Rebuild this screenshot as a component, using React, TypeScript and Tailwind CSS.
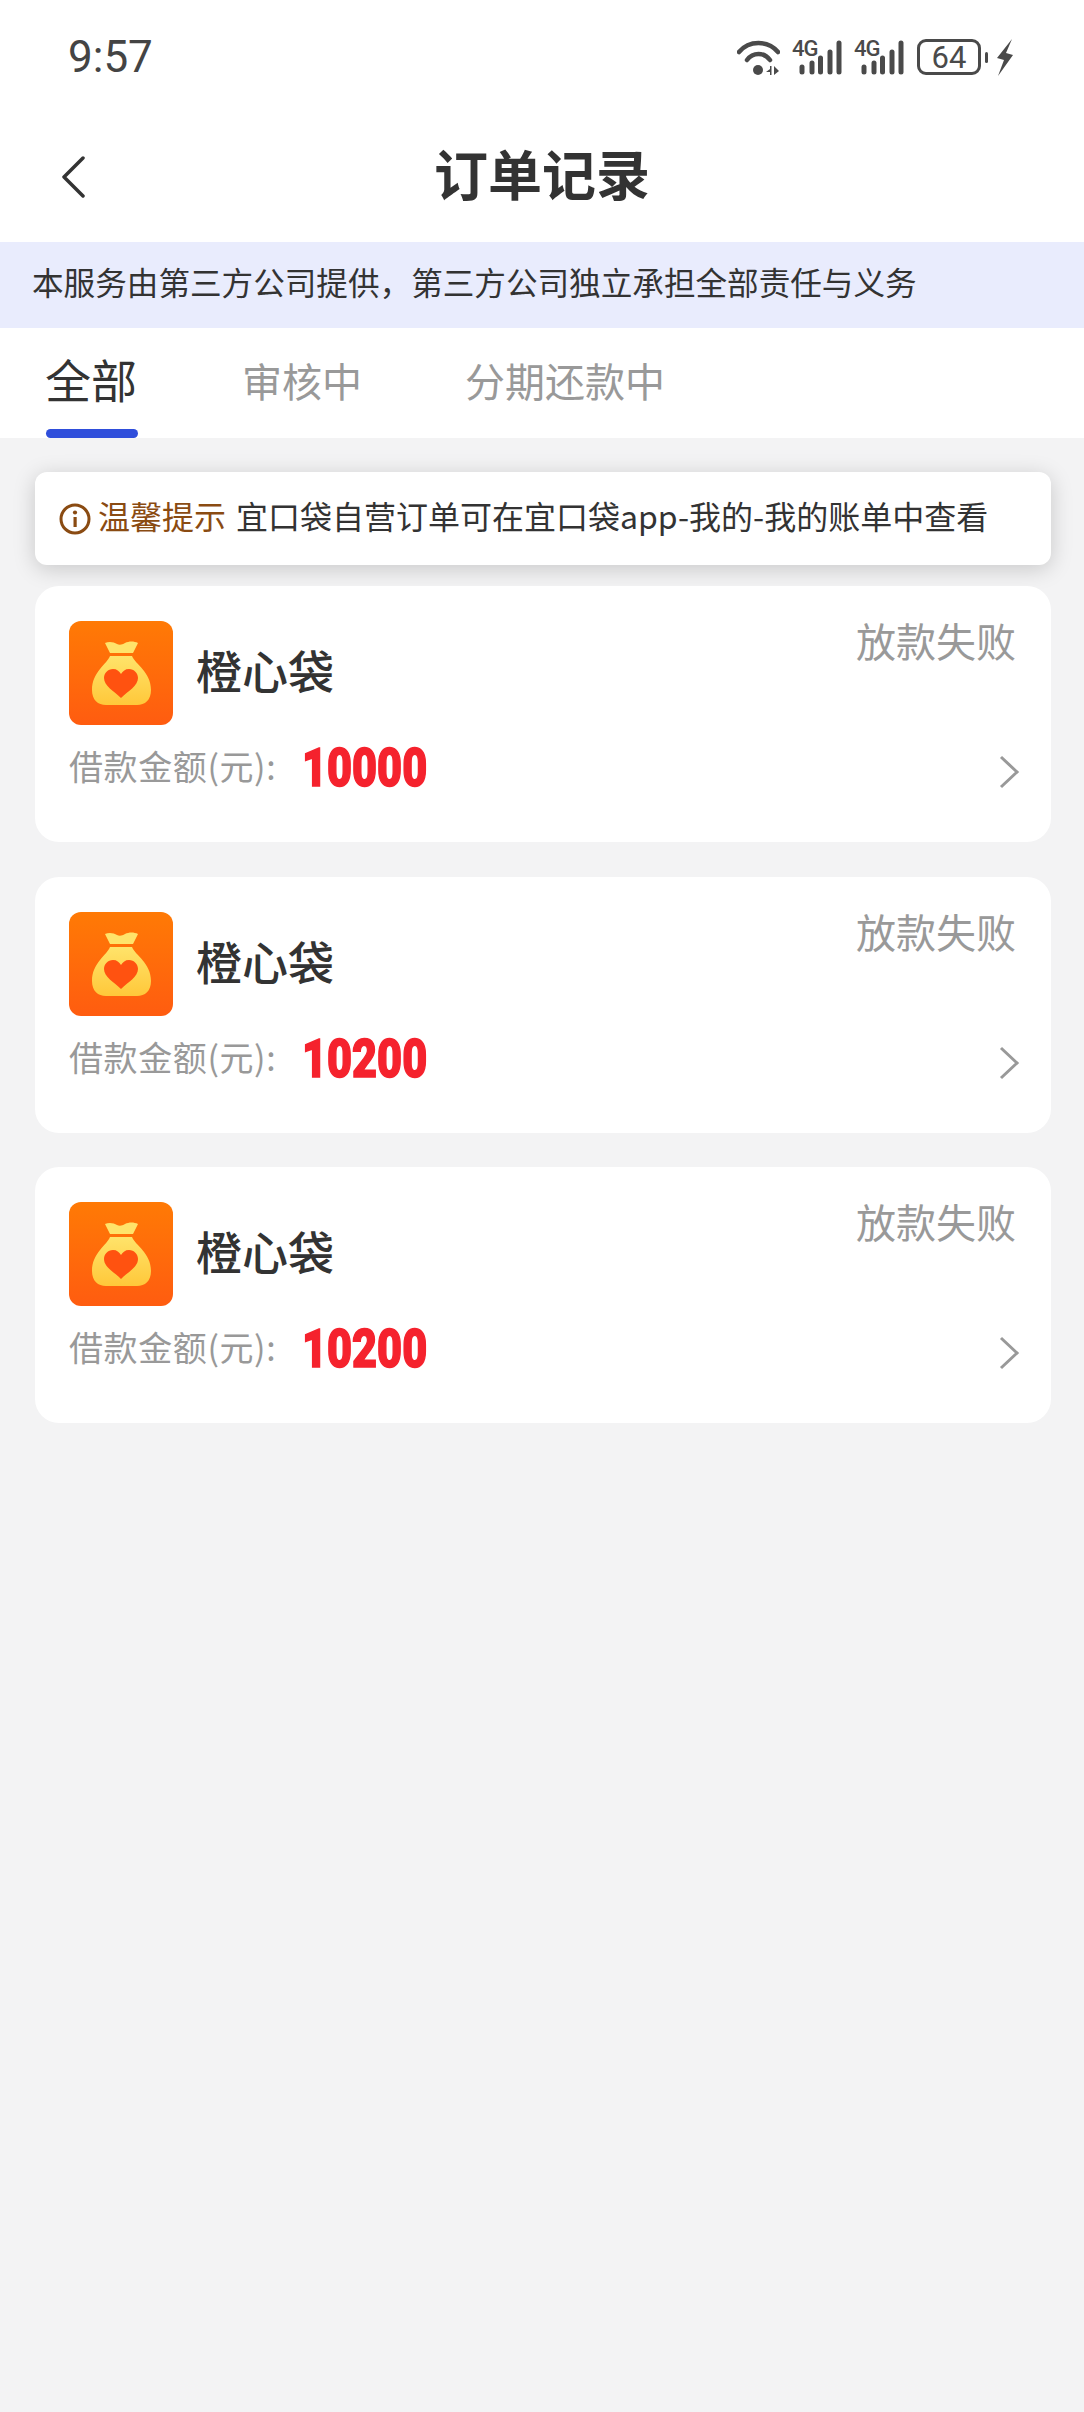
const CJK = 'font-["Noto_Sans_CJK_SC","Roboto",sans-serif]';

const orders = [{ amount: '10000' }, { amount: '10200' }, { amount: '10200' }];

function SignalIcon() {
  return (
    <div className="relative h-[35px] w-[50px]">
      <span className="absolute left-0 top-[-3px] font-['Roboto'] text-[22px] font-medium leading-[24px] tracking-[-1px] text-[#4a4a4a]">
        4G
      </span>
      <svg viewBox="0 0 50 35" className="absolute inset-0 h-full w-full">
        <g stroke="#4a4a4a" strokeWidth="5" strokeLinecap="round">
          <line x1="10" y1="27" x2="10" y2="32" />
          <line x1="20" y1="23" x2="20" y2="32" />
          <line x1="28.500" y1="18" x2="28.500" y2="32" />
          <line x1="38" y1="12" x2="38" y2="32" />
          <line x1="47" y1="3" x2="47" y2="32" />
        </g>
      </svg>
    </div>
  );
}

function StatusBar() {
  return (
    <div className="flex h-[110px] items-center justify-between pl-[68px] pr-[71px] pt-[4px]">
      <span className="font-['Roboto'] text-[44px] leading-none text-[#444444]">9:57</span>
      <div className="flex items-center">
        <svg viewBox="0 0 43 35" className="h-[35px] w-[43px]">
          <g fill="none" stroke="#4a4a4a" strokeWidth="4.5" strokeLinecap="round">
            <path d="M2 12C12 0 31 0 41 12" />
            <path d="M10 20C16 12 27 12 33 20" />
          </g>
          <circle cx="21" cy="30" r="5" fill="#4a4a4a" />
          <path d="M33 29l-4 3h4zM33 26v9h1.5v-9zM37 26v9l5-4z" fill="#4a4a4a" />
        </svg>
        <div className="ml-[12px]">
          <SignalIcon />
        </div>
        <div className="ml-[12px]">
          <SignalIcon />
        </div>
        <div className="ml-[13px] flex h-[36px] w-[64px] items-center justify-center rounded-[9px] border-[3px] border-[#4a4a4a] font-['Roboto'] text-[31px] leading-none text-[#4a4a4a]">
          64
        </div>
        <div className="ml-[4px] h-[11px] w-[3px] rounded-full bg-[#4a4a4a]" />
        <svg viewBox="0 0 16 37" className="ml-[9px] h-[37px] w-[16px]">
          <path d="M15 0L0 19l7 2L1 37 16 16l-7-2 6-14z" fill="#4a4a4a" />
        </svg>
      </div>
    </div>
  );
}

function BagLogo() {
  return (
    <svg viewBox="0 0 104 104" className="h-[104px] w-[104px] shrink-0">
      <defs>
        <linearGradient id="logo-bg" x1="0" y1="0" x2="0" y2="1">
          <stop offset="0" stopColor="#ff7a05" />
          <stop offset="1" stopColor="#ff5c10" />
        </linearGradient>
        <linearGradient id="logo-bag" x1="0" y1="0" x2="0" y2="1">
          <stop offset="0" stopColor="#ffe36a" />
          <stop offset="1" stopColor="#ffc83a" />
        </linearGradient>
      </defs>
      <rect width="104" height="104" rx="12" fill="url(#logo-bg)" />
      <path d="M36 22C40 20 45 21 48 23C50 24 53 24 56 22C60 20 65 20 69 22L64 32H41Z" fill="#ffe36a" />
      <path d="M41 35H63C66 43 82 51 82 69C82 79 76 84 68 84H37C29 84 23 79 23 69C23 51 38 43 41 35Z" fill="url(#logo-bag)" />
      <path d="M52 77C45 70 35 65 35 57C35 52 39 48 44 48C48 48 50 50 52 53C54 50 56 48 60 48C65 48 69 52 69 57C69 65 59 70 52 77Z" fill="#ff5210" />
    </svg>
  );
}

function OrderCard({ amount }: { amount: string }) {
  return (
    <div className="relative h-[256px] rounded-[24px] bg-white pl-[34px] pr-[35px] pt-[35px]">
      <div className="flex items-center">
        <BagLogo />
        <span className="mb-[8px] ml-[23px] text-[46px] font-medium leading-none text-[#333333]">橙心袋</span>
      </div>
      <div className="mt-[14px] flex h-[60px] items-center">
        <span className="mb-[6px] w-[233px] text-[34px] leading-none tracking-[0.6px] text-[#999999]">借款金额(元):</span>
        <span className="mb-[2px] inline-block origin-left scale-x-[0.8] font-['Roboto'] text-[54px] font-black leading-none text-[#f5222d] [-webkit-text-stroke:1.5px_#f5222d]">
          {amount}
        </span>
      </div>
      <span className="absolute right-[35px] top-[30px] text-[40px] leading-[48px] text-[#999999]">放款失败</span>
      <svg viewBox="0 0 22 34" className="absolute right-[31px] top-[169px] h-[34px] w-[22px]">
        <path d="M3 2l16 15L3 32" fill="none" stroke="#999999" strokeWidth="3" />
      </svg>
    </div>
  );
}

export default function App() {
  return (
    <div className={`min-h-[2412px] bg-[#f3f3f4] ${CJK}`}>
      <div className="bg-white">
        <StatusBar />
        <div className="relative flex h-[132px] items-center justify-center pb-[6px]">
          <svg viewBox="0 0 24 42" className="absolute left-[61px] top-[46px] h-[42px] w-[24px]">
            <path d="M22 2L3 21l19 19" fill="none" stroke="#333333" strokeWidth="3.500" strokeLinecap="round" strokeLinejoin="round" />
          </svg>
          <span className="text-[54px] font-bold leading-none text-[#333333]">订单记录</span>
        </div>
      </div>
      <div className="flex h-[86px] items-center bg-[#e9ecfd] pb-[6px] pl-[32px] text-[31.600px] leading-none text-[#333333]">
        本服务由第三方公司提供，第三方公司独立承担全部责任与义务
      </div>
      <div className="relative flex h-[110px] items-start bg-white pl-[45px] pt-[19px]">
        <span className="text-[46px] leading-[62px] text-[#333333]">全部</span>
        <span className="ml-[105px] mt-[2px] text-[40px] leading-[62px] text-[#999999]">审核中</span>
        <span className="ml-[103px] mt-[2px] text-[40px] leading-[62px] text-[#999999]">分期还款中</span>
        <div className="absolute bottom-0 left-[46px] h-[9px] w-[92px] rounded-full bg-[#2f4edb]" />
      </div>
      <div className="pl-[35px] pr-[33px] pt-[34px]">
        <div className="flex h-[93px] items-center rounded-[12px] bg-white pl-[24px] shadow-[0_4px_22px_rgba(0,0,0,0.18)]">
          <svg viewBox="0 0 32 32" className="h-[32px] w-[32px] shrink-0">
            <circle cx="16" cy="16" r="14" fill="none" stroke="#8a4b12" strokeWidth="3" />
            <rect x="14.500" y="14" width="3.200" height="10" fill="#8a4b12" />
            <circle cx="16" cy="9.500" r="2.100" fill="#8a4b12" />
          </svg>
          <span className="mb-[8px] ml-[7px] text-[32px] leading-none text-[#8a4b12]">温馨提示</span>
          <span className="mb-[8px] ml-[10px] text-[32px] leading-none text-[#333333]">宜口袋自营订单可在宜口袋app-我的-我的账单中查看</span>
        </div>
        <div className="mt-[21px] flex flex-col gap-[34.500px]">
          {orders.map((order, index) => (
            <OrderCard key={index} amount={order.amount} />
          ))}
        </div>
      </div>
    </div>
  );
}
